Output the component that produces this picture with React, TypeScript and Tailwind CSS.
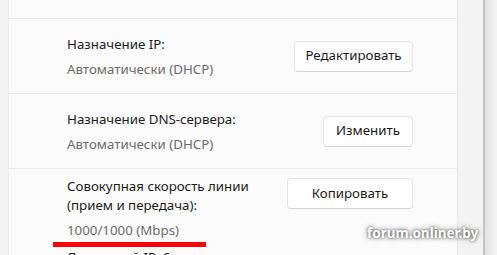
const rows = [
  { title: ['Назначение IP:'], value: 'Автоматически (DHCP)', action: 'Редактировать', btn: 'w-[119px]' },
  { title: ['Назначение DNS-сервера:'], value: 'Автоматически (DHCP)', action: 'Изменить', btn: 'w-[90px]' },
]

function ActionButton({ label, width }: { label: string; width: string }) {
  return (
    <button
      className={`${width} h-[31px] shrink-0 rounded-[4px] border border-[#e5e5e5] border-b-[#d4d4d4] bg-[#fefefe] text-[13.3px] text-[#1b1b1b]`}
    >
      {label}
    </button>
  )
}

function SettingRow({ title, value, action, btn }: (typeof rows)[number]) {
  return (
    <div className="flex h-[75px] shrink-0 items-center border-b border-[#ebebeb] pl-[58px] pr-[44px]">
      <div className="flex-1">
        {title.map((t) => (
          <div key={t} className="leading-[20px] text-[#1b1b1b]">
            {t}
          </div>
        ))}
        <div className="mt-[5px] leading-[20px] text-[#6b6b6b]">{value}</div>
      </div>
      <ActionButton label={action} width={btn} />
    </div>
  )
}

export default function App() {
  return (
    <div className="relative flex h-[255px] w-[497px] overflow-hidden bg-[#f3f3f3] font-['Noto_Sans',sans-serif] text-[13.3px]">
      <div className="w-[9px] shrink-0 border-r border-[#ebebeb]" />

      <div className="flex w-[449px] shrink-0 flex-col border-r border-[#e6e6e6] bg-[#fbfbfb]">
        <div className="h-[19px] shrink-0 border-b border-[#ebebeb]" />
        {rows.map((r) => (
          <SettingRow key={r.action} {...r} />
        ))}
        <div className="flex pl-[58px] pr-[44px]">
          <div className="flex-1 pt-[8px]">
            <div className="leading-[19px] text-[#1b1b1b]">Совокупная скорость линии</div>
            <div className="leading-[19px] text-[#1b1b1b]">(прием и передача):</div>
            <div className="mt-[5px] leading-[20px] text-[#6b6b6b]">1000/1000 (Mbps)</div>
            <div className="mt-[7px] leading-[20px] text-[#1b1b1b]">Локальный IPv6-адрес канала:</div>
          </div>
          <div className="mt-[9px]">
            <ActionButton label="Копировать" width="w-[126px]" />
          </div>
        </div>
      </div>

      <div className="w-[25px] shrink-0" />
      <div className="w-[2px] shrink-0 bg-[#c4c4c4]" />
      <div className="flex-1 bg-gradient-to-r from-[#e2e2e2] to-[#f5f5f5]" />

      {/* annotation underline */}
      <div className="absolute left-[53px] top-[242px] h-[5px] w-[153px] bg-[#ff0000]" />

      {/* watermark */}
      <div className="absolute left-[367px] top-[223px] text-[13.5px] font-bold leading-[20px] text-white [text-shadow:0_0_3px_rgba(0,0,0,0.7),0_0_6px_rgba(0,0,0,0.4)]">
        forum.onliner.by
      </div>
    </div>
  )
}
